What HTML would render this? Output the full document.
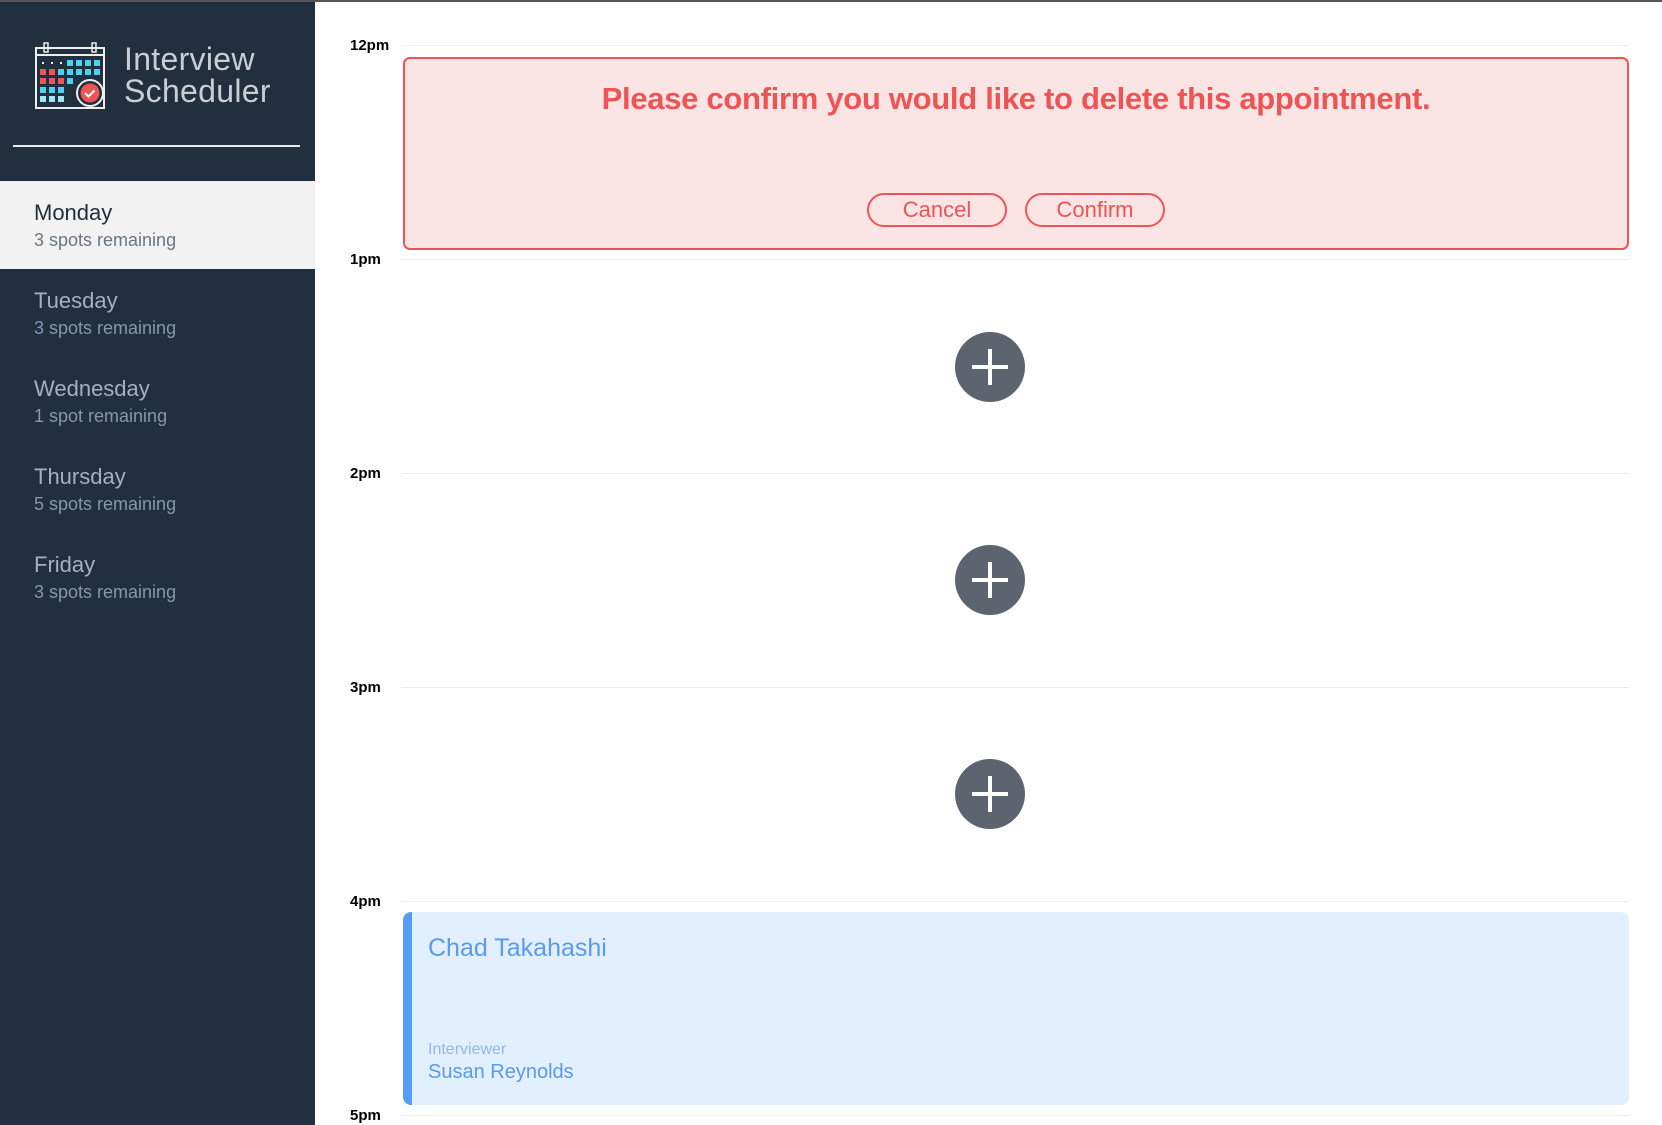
<!DOCTYPE html>
<html><head><meta charset="utf-8"><style>
*{margin:0;padding:0;box-sizing:border-box}
body{width:1662px;height:1125px;overflow:hidden;background:#fff;font-family:"Liberation Sans",sans-serif;position:relative}
.top{position:absolute;left:0;top:0;width:1662px;height:2px;background:#555}
.side{position:absolute;left:0;top:2px;width:315px;height:1123px;background:#222f3e}
.logo{position:absolute;left:35px;top:40px}
.brand{position:absolute;left:124px;top:41px;color:#c9ced4;font-size:32px;line-height:32px;font-weight:300;letter-spacing:0.3px}
.div{position:absolute;left:13px;top:143px;width:287px;height:2px;background:#e8e8e8}
.day{position:absolute;left:0;width:315px;height:88px;padding-left:34px}
.day .n{font-size:22px;color:#a2b0c2;margin-top:18px;line-height:28px}
.day .s{font-size:18px;color:#8596ad;line-height:22px;margin-top:2px}
.day.sel{background:#f2f2f2}
.day.sel .n{color:#222f3e}
.day.sel .s{color:#6b7685}
.t{position:absolute;left:350px;font-size:15px;font-weight:bold;color:#000}
.ln{position:absolute;left:401px;width:1228px;height:1px;background:#eee}
.confirm{position:absolute;left:403px;top:57px;width:1226px;height:193px;background:#fbe4e4;border:2px solid #ef5454;border-radius:7px}
.confirm h1{position:absolute;left:0;right:0;top:22px;text-align:center;color:#ef5454;font-size:31px;font-weight:600;letter-spacing:-0.3px}
.btn{position:absolute;top:134px;width:140px;height:34px;border:2px solid #ef5454;border-radius:17px;color:#ef5454;font-size:22px;text-align:center;line-height:30px}
.plus{position:absolute;left:955px;width:70px;height:70px;border-radius:50%;background:#5b646f}
.plus:before{content:"";position:absolute;left:17px;top:33px;width:36px;height:4px;background:#fff}
.plus:after{content:"";position:absolute;left:33px;top:17px;width:4px;height:36px;background:#fff}
.card{position:absolute;left:403px;top:912px;width:1226px;height:193px;background:#e2efff;border-left:9px solid #559dfa;border-radius:8px}
.card .nm{position:absolute;left:16px;top:22px;font-size:25px;color:#5a9aef}
.card .il{position:absolute;left:16px;top:129px;font-size:16px;color:#96b4f2}
.card .iv{position:absolute;left:16px;top:149px;font-size:20px;color:#5a9aef}
</style></head><body>
<div class="top"></div>
<div class="side">
<svg class="logo" width="72" height="68" viewBox="0 0 72 68">
<rect x="1" y="6" width="68" height="60" fill="none" stroke="#eee" stroke-width="2"/>
<line x1="1" y1="13" x2="69" y2="13" stroke="#eee" stroke-width="2"/>
<rect x="9" y="1" width="4" height="9" fill="none" stroke="#eee" stroke-width="1.5"/>
<rect x="57" y="1" width="4" height="9" fill="none" stroke="#eee" stroke-width="1.5"/>
<g fill="#eee"><rect x="7" y="20" width="2" height="2"/><rect x="16" y="20" width="2" height="2"/><rect x="25" y="20" width="2" height="2"/></g>
<g fill="#4fd1ec"><rect x="32" y="18" width="6" height="6"/><rect x="41" y="18" width="6" height="6"/><rect x="50" y="18" width="6" height="6"/><rect x="59" y="18" width="6" height="6"/>
<rect x="23" y="27" width="6" height="6"/><rect x="32" y="27" width="6" height="6"/><rect x="41" y="27" width="6" height="6"/><rect x="50" y="27" width="6" height="6"/><rect x="59" y="27" width="6" height="6"/>
<rect x="32" y="36" width="6" height="6"/><rect x="5" y="45" width="6" height="6"/><rect x="14" y="45" width="6" height="6"/><rect x="23" y="45" width="6" height="6"/></g>
<g fill="#9ee4f2"><rect x="5" y="54" width="6" height="6"/><rect x="14" y="54" width="6" height="6"/><rect x="23" y="54" width="6" height="6"/></g>
<g fill="#ef5454"><rect x="5" y="27" width="6" height="6"/><rect x="14" y="27" width="6" height="6"/><rect x="5" y="36" width="6" height="6"/><rect x="14" y="36" width="6" height="6"/><rect x="23" y="36" width="6" height="6"/></g>
<circle cx="55" cy="51" r="13" fill="#222f3e" stroke="#eee" stroke-width="2"/>
<circle cx="55" cy="51" r="9.5" fill="#ef5454"/>
<path d="M50 51 l3.5 3.5 l6 -6" fill="none" stroke="#fff" stroke-width="2"/>
</svg>
<div class="brand">Interview<br>Scheduler</div>
<div class="div"></div>
<div class="day sel" style="top:179px"><div class="n">Monday</div><div class="s">3 spots remaining</div></div>
<div class="day" style="top:267px"><div class="n">Tuesday</div><div class="s">3 spots remaining</div></div>
<div class="day" style="top:355px"><div class="n">Wednesday</div><div class="s">1 spot remaining</div></div>
<div class="day" style="top:443px"><div class="n">Thursday</div><div class="s">5 spots remaining</div></div>
<div class="day" style="top:531px"><div class="n">Friday</div><div class="s">3 spots remaining</div></div>
</div>

<div class="t" style="top:37px">12pm</div><div class="ln" style="top:45px"></div>
<div class="t" style="top:251px">1pm</div><div class="ln" style="top:259px"></div>
<div class="t" style="top:465px">2pm</div><div class="ln" style="top:473px"></div>
<div class="t" style="top:679px">3pm</div><div class="ln" style="top:687px"></div>
<div class="t" style="top:893px">4pm</div><div class="ln" style="top:901px"></div>
<div class="t" style="top:1107px">5pm</div><div class="ln" style="top:1115px"></div>

<div class="confirm"><h1>Please confirm you would like to delete this appointment.</h1>
<div class="btn" style="left:462px">Cancel</div>
<div class="btn" style="left:620px">Confirm</div></div>

<div class="plus" style="top:332px"></div>
<div class="plus" style="top:545px"></div>
<div class="plus" style="top:759px"></div>

<div class="card"><div class="nm">Chad Takahashi</div><div class="il">Interviewer</div><div class="iv">Susan Reynolds</div></div>
</body></html>
